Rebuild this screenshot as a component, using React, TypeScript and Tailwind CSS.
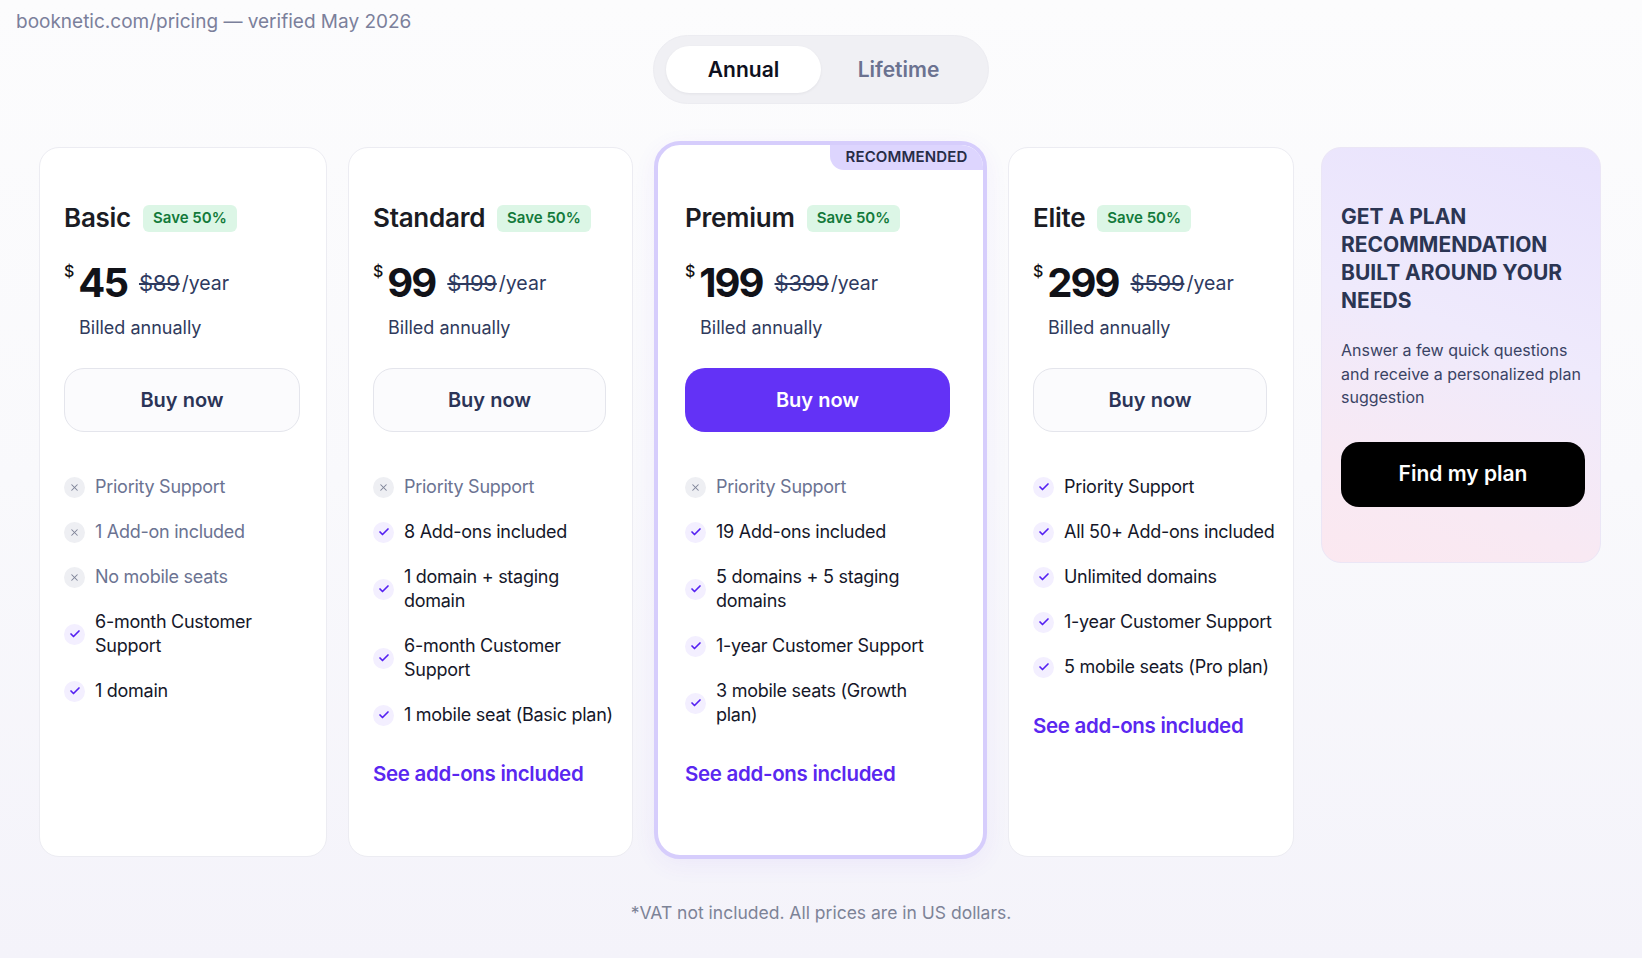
import React from "react";

type Feature = { lines: string[]; ok: boolean };
type Plan = {
  name: string;
  price: string;
  old: string;
  features: Feature[];
  link: boolean;
  featured?: boolean;
};

const plans: Plan[] = [
  {
    name: "Basic",
    price: "45",
    old: "$89",
    link: false,
    features: [
      { lines: ["Priority Support"], ok: false },
      { lines: ["1 Add-on included"], ok: false },
      { lines: ["No mobile seats"], ok: false },
      { lines: ["6-month Customer", "Support"], ok: true },
      { lines: ["1 domain"], ok: true },
    ],
  },
  {
    name: "Standard",
    price: "99",
    old: "$199",
    link: true,
    features: [
      { lines: ["Priority Support"], ok: false },
      { lines: ["8 Add-ons included"], ok: true },
      { lines: ["1 domain + staging", "domain"], ok: true },
      { lines: ["6-month Customer", "Support"], ok: true },
      { lines: ["1 mobile seat (Basic plan)"], ok: true },
    ],
  },
  {
    name: "Premium",
    price: "199",
    old: "$399",
    link: true,
    featured: true,
    features: [
      { lines: ["Priority Support"], ok: false },
      { lines: ["19 Add-ons included"], ok: true },
      { lines: ["5 domains + 5 staging", "domains"], ok: true },
      { lines: ["1-year Customer Support"], ok: true },
      { lines: ["3 mobile seats (Growth", "plan)"], ok: true },
    ],
  },
  {
    name: "Elite",
    price: "299",
    old: "$599",
    link: true,
    features: [
      { lines: ["Priority Support"], ok: true },
      { lines: ["All 50+ Add-ons included"], ok: true },
      { lines: ["Unlimited domains"], ok: true },
      { lines: ["1-year Customer Support"], ok: true },
      { lines: ["5 mobile seats (Pro plan)"], ok: true },
    ],
  },
];

function CheckIcon() {
  return (
    <svg width="12" height="12" viewBox="0 0 24 24" fill="none" stroke="#5521f2" strokeWidth="3.4" strokeLinecap="round" strokeLinejoin="round">
      <polyline points="20 6 9 17 4 12" />
    </svg>
  );
}

function XIcon() {
  return (
    <svg width="11" height="11" viewBox="0 0 24 24" fill="none" stroke="#7d8297" strokeWidth="2.2" strokeLinecap="round">
      <line x1="18" y1="6" x2="6" y2="18" />
      <line x1="6" y1="6" x2="18" y2="18" />
    </svg>
  );
}

function FeatureRow({ f }: { f: Feature }) {
  return (
    <div className="flex items-center">
      <div
        className={
          "flex h-[21px] w-[21px] shrink-0 items-center justify-center rounded-full " +
          (f.ok ? "bg-[#f3efff]" : "bg-[#eeeff3]")
        }
      >
        {f.ok ? <CheckIcon /> : <XIcon />}
      </div>
      <div
        className={
          "ml-[10px] whitespace-nowrap text-[18px] leading-[24px] tracking-[-0.015em] " +
          (f.ok ? "text-[#151729]" : "text-[#6b7392]")
        }
      >
        {f.lines.map((l, i) => (
          <div key={i}>{l}</div>
        ))}
      </div>
    </div>
  );
}

function CardBody({ p }: { p: Plan }) {
  return (
    <>
      <div className="flex h-[32px] items-center">
        <span className="text-[26px] font-semibold leading-[32px] tracking-[-0.01em] text-[#1b1c24]">{p.name}</span>
        <span className="ml-[12px] flex h-[27px] items-center rounded-[6px] bg-[#dcf6e6] px-[10px] text-[15px] font-semibold text-[#137a3b]">
          Save 50%
        </span>
      </div>
      <div className="mt-[29px] flex h-[40px] items-center">
        <span className="self-start text-[16px] font-medium leading-[16px] text-[#111]">$</span>
        <span className="ml-[4px] text-[40px] font-bold leading-[40px] tracking-[-0.05em] text-[#111218]">{p.price}</span>
        <span className="ml-[12px] text-[22px] leading-[24px] tracking-[-0.01em] text-[#2e3a5f] line-through decoration-[1.5px]">{p.old}</span>
        <span className="ml-[2px] text-[19.5px] leading-[24px] text-[#2e3a5f]">/year</span>
      </div>
      <div className="mt-[13px] pl-[15px] text-[18px] leading-[24px] text-[#2f3a5c]">Billed annually</div>
      <button
        className={
          "mt-[28px] flex h-[64px] w-full items-center justify-center rounded-[20px] text-[20px] font-semibold " +
          (p.featured
            ? "bg-[#6332f6] text-white"
            : "border border-[#e4e5ec] bg-[#fbfbfd] text-[#2b3457]")
        }
      >
        Buy now
      </button>
      <div className="mt-[43px] flex flex-col gap-[21px]">
        {p.features.map((f, i) => (
          <FeatureRow key={i} f={f} />
        ))}
      </div>
      {p.link && (
        <div className="mt-[33px] text-[20.5px] font-semibold leading-[28px] tracking-[-0.015em] text-[#5a27f0]">
          See add-ons included
        </div>
      )}
    </>
  );
}

export default function App() {
  return (
    <div className="min-h-screen w-full bg-[linear-gradient(180deg,#fcfcfd_0%,#f9f9fc_50%,#f4f3fa_100%)] font-['Inter','Noto_Sans',sans-serif]">
      <div className="px-[16px] pt-[10px] text-[19px] leading-[24px] text-[#7b809b]">
        booknetic.com/pricing — verified May 2026
      </div>
      <div className="mx-auto mt-[1px] flex h-[69px] w-[336px] items-center rounded-full border border-[#ececf1] bg-[#f0f0f4] px-[12px]">
        <div className="flex h-[47px] w-[155px] items-center justify-center rounded-full bg-white text-[21px] font-semibold text-[#0e1020] shadow-[0_1px_3px_rgba(20,20,40,0.06)]">
          Annual
        </div>
        <div className="flex flex-1 items-center justify-center text-[21px] font-semibold text-[#6b7290]">Lifetime</div>
      </div>

      <div className="mt-[37px] flex items-start pl-[39px]">
        {plans.map((p, i) => {
          if (p.featured) {
            return (
              <div
                key={i}
                className="relative ml-[21px] h-[718px] w-[333px] overflow-hidden rounded-[26px] border-[4px] border-[#d6cdfc] bg-white pl-[27px] pr-[33px] pt-[57px] shadow-[0_6px_24px_rgba(98,50,246,0.06)]"
              >
                <div className="absolute right-0 top-0 flex h-[25px] w-[153px] items-center justify-center rounded-bl-[14px] bg-[#ddd5fe] text-[15px] font-semibold tracking-[0.01em] text-[#272c46]">
                  RECOMMENDED
                </div>
                <CardBody p={p} />
              </div>
            );
          }
          const w = i === 0 ? "w-[288px]" : i === 1 ? "ml-[21px] w-[285px]" : "ml-[21px] w-[286px]";
          return (
            <div
              key={i}
              className={
                "mt-[6px] h-[710px] rounded-[20px] border border-[#ececf2] bg-white pl-[24px] pr-[26px] pt-[54px] " + w
              }
            >
              <CardBody p={p} />
            </div>
          );
        })}

        <div className="ml-[27px] mt-[6px] w-[280px] rounded-[20px] border border-[#ebe6f6] bg-[linear-gradient(200deg,#e8e2fd_0%,#efeafc_45%,#f8e9f3_80%,#fbe8f0_100%)] pb-[55px] pl-[19px] pr-[17px] pt-[55px]">
          <div className="text-[21px] font-bold uppercase leading-[28px] text-[#2b3553]">
            <div className="whitespace-nowrap">GET A PLAN</div>
            <div className="whitespace-nowrap">RECOMMENDATION</div>
            <div className="whitespace-nowrap">BUILT AROUND YOUR</div>
            <div className="whitespace-nowrap">NEEDS</div>
          </div>
          <div className="mt-[24px] text-[16px] leading-[23.5px] text-[#3a4364]">
            <div className="whitespace-nowrap">Answer a few quick questions</div>
            <div className="whitespace-nowrap">and receive a personalized plan</div>
            <div className="whitespace-nowrap">suggestion</div>
          </div>
          <button className="mt-[32px] flex h-[65px] w-[244px] items-center justify-center rounded-[18px] bg-black text-[21px] font-semibold text-white">
            Find my plan
          </button>
        </div>
      </div>

      <div className="mt-[43px] pb-[33px] text-center text-[17.5px] leading-[22px] text-[#7d8397]">
        *VAT not included. All prices are in US dollars.
      </div>
    </div>
  );
}
